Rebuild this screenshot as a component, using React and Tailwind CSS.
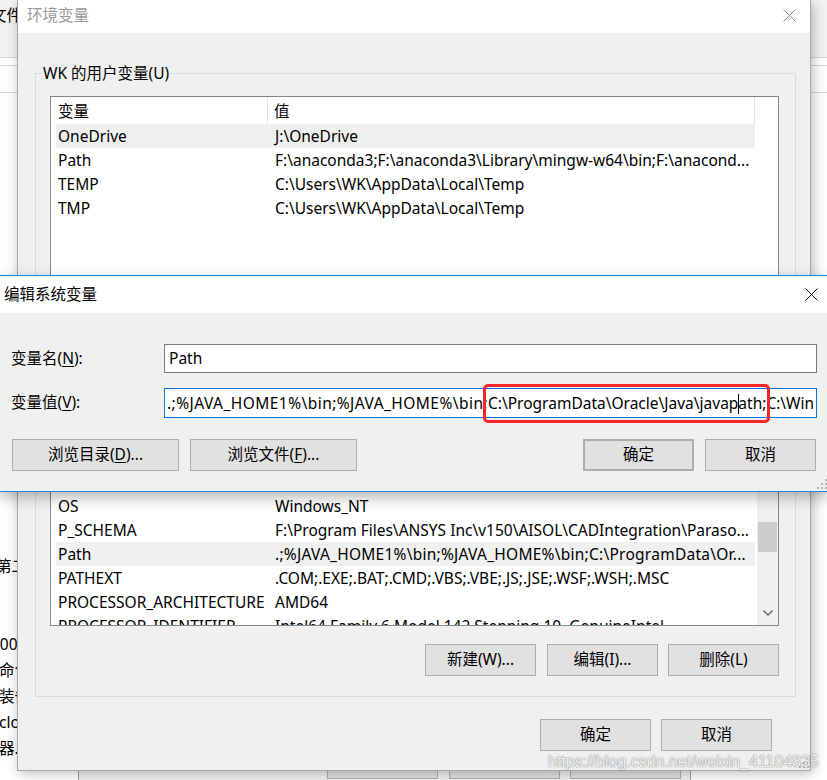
import React from 'react'

const userVars = [
  ['OneDrive', 'J:\\OneDrive', true],
  ['Path', 'F:\\anaconda3;F:\\anaconda3\\Library\\mingw-w64\\bin;F:\\anacond...'],
  ['TEMP', 'C:\\Users\\WK\\AppData\\Local\\Temp'],
  ['TMP', 'C:\\Users\\WK\\AppData\\Local\\Temp'],
]

// last flag: the %-heavy value, YaHei sets it a bit wider than Noto Sans
const systemVars = [
  ['JAVA_HOME1', 'C:\\Program Files\\Java\\jdk1.8.0_201'],
  ['NUMBER_OF_PROCESSORS', '8'],
  ['OS', 'Windows_NT'],
  ['P_SCHEMA', 'F:\\Program Files\\ANSYS Inc\\v150\\AISOL\\CADIntegration\\Paraso...'],
  ['Path', '.;%JAVA_HOME1%\\bin;%JAVA_HOME%\\bin;C:\\ProgramData\\Or...', true, true],
  ['PATHEXT', '.COM;.EXE;.BAT;.CMD;.VBS;.VBE;.JS;.JSE;.WSF;.WSH;.MSC'],
  ['PROCESSOR_ARCHITECTURE', 'AMD64'],
  ['PROCESSOR_IDENTIFIER', 'Intel64 Family 6 Model 142 Stepping 10, GenuineIntel'],
]

function CloseIcon({ color }) {
  return (
    <svg width="13" height="13" viewBox="0 0 13 13">
      <path d="M0.5 0.5 L12.5 12.5 M12.5 0.5 L0.5 12.5" stroke={color} strokeWidth="1" fill="none" />
    </svg>
  )
}

function Grip() {
  return (
    <svg width="10" height="10" viewBox="0 0 10 10">
      <g fill="#b4b4b4">
        <rect x="8" y="0" width="2" height="2" />
        <rect x="4" y="4" width="2" height="2" />
        <rect x="8" y="4" width="2" height="2" />
        <rect x="0" y="8" width="2" height="2" />
        <rect x="4" y="8" width="2" height="2" />
        <rect x="8" y="8" width="2" height="2" />
      </g>
    </svg>
  )
}

function Btn({ children, className = '' }) {
  return (
    <button
      type="button"
      className={`flex h-[32px] items-center justify-center border border-[#adadad] bg-[#e1e1e1] ${className}`}
    >
      {children}
    </button>
  )
}

function Scrollbar() {
  return (
    <div className="flex w-[21px] shrink-0 flex-col bg-[#f0f0f0]">
      <div className="h-[17px]" />
      <div className="mt-[86px] mx-px h-[30px] bg-[#cdcdcd]" />
      <div className="flex-1" />
      <div className="flex h-[22px] items-center justify-center pb-[2px]">
        <svg width="10" height="6" viewBox="0 0 10 6">
          <path d="M0.5 0.5 L5 5 L9.5 0.5" stroke="#606060" strokeWidth="1.3" fill="none" />
        </svg>
      </div>
    </div>
  )
}

function VarList({ rows, className = '', scroll }) {
  return (
    <div className={`flex overflow-hidden border border-[#828790] bg-white ${className}`}>
      <div className="min-w-0 flex-1 overflow-hidden pl-[5px]">
        <div className="flex h-[27px] w-[699px]">
          <div className="flex w-[212px] shrink-0 items-center border-r border-[#e5e5e5] pt-[2px] pl-[2px]">变量</div>
          <div className="flex flex-1 items-center border-r border-[#e5e5e5] pt-[2px] pl-[6px]">值</div>
        </div>
        {rows.map(([name, value, selected, wide]) => (
          <div
            key={name}
            className={`flex h-[24px] w-[699px] items-center whitespace-nowrap pt-px ${selected ? 'bg-[#f0f0f0]' : ''}`}
          >
            <div className="w-[212px] shrink-0 overflow-hidden pl-[2px]">{name}</div>
            <div className={`min-w-0 flex-1 overflow-hidden pl-[7px] ${wide ? 'tracking-[0.25px]' : ''}`}>{value}</div>
          </div>
        ))}
      </div>
      {scroll && <Scrollbar />}
    </div>
  )
}

function GroupBox({ label, children, className = '' }) {
  return (
    <div className={`relative border border-[#dcdcdc] pt-[21px] pb-[20px] pl-[14px] pr-[16px] ${className}`}>
      <span className="absolute -top-[11px] left-[6px] bg-[#f0f0f0] px-px leading-[20px]">{label}</span>
      {children}
      <div className="mt-[18px] flex justify-end">
        <Btn className="w-[111px]">新建(W)...</Btn>
        <Btn className="ml-[11px] w-[111px]">编辑(I)...</Btn>
        <Btn className="ml-[10px] w-[111px]">删除(L)</Btn>
      </div>
    </div>
  )
}

function BackgroundApp() {
  return (
    <div className="flex h-full flex-col">
      <div className="h-[57px] bg-[#f3f3f3] pt-[5px] leading-[20px]">
        <span className="-ml-[9px]">文件</span>
      </div>
      <div className="h-px bg-[#d6d6d6]" />
      <div className="h-[7px]" />
      <div className="h-px bg-[#d6d6d6]" />
      <div className="h-[26px]" />
      <div className="h-px bg-[#d6d6d6]" />
      <div className="flex flex-1 flex-col pt-[460px] leading-[26px] whitespace-nowrap">
        <span className="-ml-[4px]">第二</span>
        <span>&nbsp;</span>
        <span>&nbsp;</span>
        <span className="-ml-[9px]">100</span>
        <span className="-ml-[1px]">命令</span>
        <span className="-ml-[1px]">装备</span>
        <span className="-ml-[1px]">clo</span>
        <span className="-ml-[1px]">器.p</span>
      </div>
      <div className="flex h-[9px]">
        <div className="w-[78px]" />
        <div className="flex w-[613px] border-x border-[#a0a0a0] bg-[#f0f0f0] pl-[248px]">
          <div className="h-[8px] w-[111px] border-x border-b border-[#adadad] bg-[#e1e1e1]" />
          <div className="ml-[11px] h-[8px] w-[111px] border-x border-b border-[#adadad] bg-[#e1e1e1]" />
          <div className="ml-[10px] h-[8px] w-[111px] border-x border-b border-[#adadad] bg-[#e1e1e1]" />
        </div>
      </div>
    </div>
  )
}

function EnvWindow() {
  return (
    <div className="absolute left-[17px] top-0 flex h-[771px] w-[794px] flex-col border-x border-b border-[#a8a8a8] bg-[#f0f0f0] shadow-[2px_2px_12px_rgba(0,0,0,0.28)]">
      <div className="flex h-[33px] shrink-0 items-center justify-between bg-white pl-[9px] pr-[14px] pb-[2px]">
        <span className="text-[#9a9a9a]">环境变量</span>
        <CloseIcon color="#8a8a8a" />
      </div>
      <div className="relative flex-1 pt-[40px] pl-[17px] pr-[14px]">
        <GroupBox label="WK 的用户变量(U)" className="pt-[22px]">
          <VarList rows={userVars} className="h-[193px]" />
        </GroupBox>
        <GroupBox label="系统变量(S)" className="mt-[36px]">
          <VarList rows={systemVars} className="h-[208px]" scroll />
        </GroupBox>
        <div className="mt-[22px] flex justify-end pr-[24px]">
          <Btn className="w-[111px]">确定</Btn>
          <Btn className="ml-[10px] w-[111px]">取消</Btn>
        </div>
        <div className="absolute bottom-[2px] right-[1px]">
          <Grip />
        </div>
      </div>
    </div>
  )
}

function EditDialog() {
  const before = '.;%JAVA_HOME1%\\bin;%JAVA_HOME%\\bin;'
  const boxed1 = 'C:\\ProgramData\\Oracle\\Java\\javap'
  const boxed2 = 'ath;'
  const after = 'C:\\Windows\\system32;C:\\Windows;C:\\Windows\\System32\\Wbem'

  return (
    <div className="absolute left-[-1px] top-[275px] w-[829px] border border-[#2b85d3] bg-[#f0f0f0] shadow-[0_5px_14px_rgba(0,0,0,0.3)]">
      <div className="flex h-[37px] items-center justify-between bg-white pl-[4px] pr-[9px]">
        <span>编辑系统变量</span>
        <CloseIcon color="#111" />
      </div>
      <div className="relative pt-[31px] pb-[20px] pl-[11px] pr-[10px]">
        <div className="flex items-center">
          <span className="w-[153px] shrink-0">
            变量名(<span className="underline underline-offset-2">N</span>):
          </span>
          <div className="flex h-[29px] flex-1 items-center border border-[#7a7a7a] bg-white pl-[4px]">Path</div>
        </div>
        <div className="mt-[15px] flex items-center">
          <span className="w-[153px] shrink-0">
            变量值(<span className="underline underline-offset-2">V</span>):
          </span>
          <div className="h-[30px] min-w-0 flex-1 border border-[#0078d7] bg-white pl-[2px]">
            <div className="h-[28px] whitespace-nowrap leading-[28px] [clip-path:inset(-12px_3px_-12px_0)]">
              <span className="tracking-[0.45px]">{before}</span>
              <span className="relative inline-block h-[28px] leading-[28px]">
                {boxed1}
                <span className="-mr-px inline-block h-[20px] w-px bg-black align-[-5px]" />
                {boxed2}
                <span className="absolute -top-[5px] -bottom-[6px] -left-[5px] -right-[4px] rounded-[5px] border-[3px] border-[#f3262a]" />
              </span>
              {after}
            </div>
          </div>
        </div>
        <div className="mt-[21px] flex items-center">
          <Btn className="ml-px w-[167px]">
            浏览目录(<span className="underline underline-offset-2">D</span>)...
          </Btn>
          <Btn className="ml-[11px] w-[167px]">
            浏览文件(<span className="underline underline-offset-2">F</span>)...
          </Btn>
          <div className="flex-1" />
          <Btn className="w-[111px] border-2 border-[#0078d7]">确定</Btn>
          <Btn className="ml-[11px] mr-px w-[111px]">取消</Btn>
        </div>
        <div className="absolute bottom-[2px] right-[0px]">
          <Grip />
        </div>
      </div>
    </div>
  )
}

export default function App() {
  return (
    <div className="relative h-[780px] w-[827px] overflow-hidden bg-white font-['Noto_Sans','Noto_Sans_CJK_SC',sans-serif] text-[15.5px] text-black">
      <BackgroundApp />
      <EnvWindow />
      <EditDialog />
      <div className="absolute left-[548px] top-[752px] whitespace-nowrap font-['Liberation_Sans',Arial,sans-serif] text-[16px] leading-[20px] text-white/90 [text-shadow:0_0_1px_rgba(0,0,0,0.5),0_0_2px_rgba(0,0,0,0.25)]">
        https://blog.csdn.net/weixin_41104835
      </div>
    </div>
  )
}
